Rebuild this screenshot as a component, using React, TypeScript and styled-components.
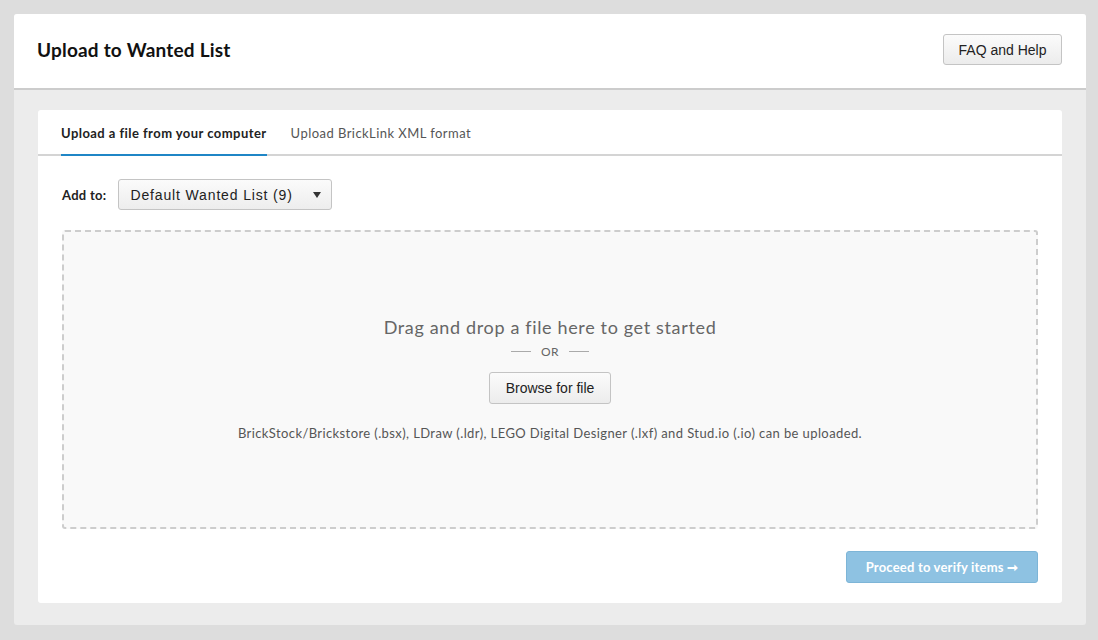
import * as React from "react";
import styled, { createGlobalStyle } from "styled-components";

const COLORS = {
  page: "#dddddd",
  panel: "#ececec",
  white: "#ffffff",
  text: "#111111",
  muted: "#555555",
  blue: "#1f86c6",
  line: "#cccccc",
};

const FONT = `"Lato", "Open Sans", "Liberation Sans", sans-serif`;
const BTN_FONT = `"Liberation Sans", Arial, sans-serif`;

const GlobalStyle = createGlobalStyle`
  html, body {
    margin: 0;
    padding: 0;
    background: ${COLORS.page};
    font-family: ${FONT};
  }
  * { box-sizing: border-box; }
`;

const Page = styled.div`
  padding: 14px 12px 14px 14px;
  height: 640px;
`;

const Panel = styled.div`
  background: ${COLORS.panel};
  border-radius: 3px;
  overflow: hidden;
  height: 611px;
  display: flex;
  flex-direction: column;
`;

const Header = styled.div`
  flex-shrink: 0;
  background: ${COLORS.white};
  height: 76px;
  border-bottom: 2px solid ${COLORS.line};
  display: flex;
  align-items: center;
  justify-content: space-between;
  padding: 0 24px 3px 23px;
`;

const Title = styled.h1`
  margin: 0;
  font-size: 19px;
  font-weight: 700;
  color: ${COLORS.text};
  letter-spacing: 0.2px;
`;

const GrayButton = styled.button<{ $w: number; $h: number }>`
  width: ${(p) => p.$w}px;
  height: ${(p) => p.$h}px;
  background: linear-gradient(#fbfbfb, #ececec);
  border: 1px solid #c4c4c4;
  border-radius: 3px;
  font-family: ${BTN_FONT};
  font-size: 14px;
  color: #222;
  padding: 0;
  cursor: pointer;
`;

const Body = styled.div`
  flex: 1;
  min-height: 0;
  padding: 20px 24px 22px 24px;
`;

const Card = styled.div`
  background: ${COLORS.white};
  border-radius: 3px;
  height: 100%;
  display: flex;
  flex-direction: column;
`;

const Tabs = styled.div`
  flex-shrink: 0;
  display: flex;
  gap: 24px;
  padding: 0 0 0 23px;
  border-bottom: 2px solid #d4d4d4;
  height: 46px;
`;

const Tab = styled.div<{ $active?: boolean }>`
  font-size: 13px;
  font-weight: ${(p) => (p.$active ? 700 : 400)};
  color: ${(p) => (p.$active ? "#222" : "#555")};
  display: flex;
  align-items: center;
  padding-top: 1px;
  border-bottom: 2px solid ${(p) => (p.$active ? COLORS.blue : "transparent")};
  margin-bottom: -2px;
  letter-spacing: 0.45px;
`;

const Content = styled.div`
  padding: 23px 24px 20px 24px;
  display: flex;
  flex-direction: column;
  flex: 1;
`;

const AddRow = styled.div`
  display: flex;
  align-items: center;
  gap: 11px;
`;

const Label = styled.span`
  font-size: 13px;
  font-weight: 700;
  color: #222;
  letter-spacing: 0.3px;
`;

const Select = styled.div`
  width: 214px;
  height: 31px;
  background: linear-gradient(#fbfbfb, #ededed);
  border: 1px solid #c4c4c4;
  border-radius: 3px;
  display: flex;
  align-items: center;
  justify-content: space-between;
  padding: 0 10px 0 12px;
  font-family: ${BTN_FONT};
  font-size: 14px;
  color: #222;
  letter-spacing: 0.85px;
`;

const Caret = styled.span`
  width: 0;
  height: 0;
  border-left: 4px solid transparent;
  border-right: 4px solid transparent;
  border-top: 6px solid #333;
`;

const Dropzone = styled.div`
  margin-top: 20px;
  height: 299px;
  border: 2px dashed #cdcdcd;
  border-radius: 3px;
  background: #f9f9f9;
  display: flex;
  flex-direction: column;
  align-items: center;
  padding-top: 84px;
`;

const DropTitle = styled.div`
  font-size: 18px;
  color: #666;
  letter-spacing: 0.65px;
`;

const Or = styled.div`
  display: flex;
  align-items: center;
  gap: 10px;
  margin-top: 6px;
  font-size: 12px;
  color: #666;
  letter-spacing: 0.5px;
  &::before,
  &::after {
    content: "";
    width: 20px;
    height: 1px;
    background: #aaa;
  }
`;

const BrowseWrap = styled.div`
  margin-top: 13px;
`;

const Hint = styled.div`
  margin-top: 21px;
  font-size: 13px;
  color: #555;
  letter-spacing: 0.4px;
`;

const Footer = styled.div`
  margin-top: 22px;
  display: flex;
  justify-content: flex-end;
`;

const Proceed = styled.button`
  width: 192px;
  height: 32px;
  background: #8ec2e2;
  border: 1px solid #7db5d7;
  border-radius: 3px;
  color: #fff;
  font-family: ${FONT};
  font-weight: 700;
  font-size: 13px;
  letter-spacing: 0.2px;
  padding: 0;
`;

export default function App() {
  return (
    <>
      <GlobalStyle />
      <Page>
        <Panel>
          <Header>
            <Title>Upload to Wanted List</Title>
            <GrayButton $w={119} $h={31}>FAQ and Help</GrayButton>
          </Header>
          <Body>
            <Card>
              <Tabs>
                <Tab $active>Upload a file from your computer</Tab>
                <Tab>Upload BrickLink XML format</Tab>
              </Tabs>
              <Content>
                <AddRow>
                  <Label>Add to:</Label>
                  <Select>
                    <span>Default Wanted List (9)</span>
                    <Caret />
                  </Select>
                </AddRow>
                <Dropzone>
                  <DropTitle>Drag and drop a file here to get started</DropTitle>
                  <Or>OR</Or>
                  <BrowseWrap>
                    <GrayButton $w={122} $h={32}>Browse for file</GrayButton>
                  </BrowseWrap>
                  <Hint>
                    BrickStock/Brickstore (.bsx), LDraw (.ldr), LEGO Digital Designer (.lxf) and Stud.io (.io) can be uploaded.
                  </Hint>
                </Dropzone>
                <Footer>
                  <Proceed>Proceed to verify items ➞</Proceed>
                </Footer>
              </Content>
            </Card>
          </Body>
        </Panel>
      </Page>
    </>
  );
}
